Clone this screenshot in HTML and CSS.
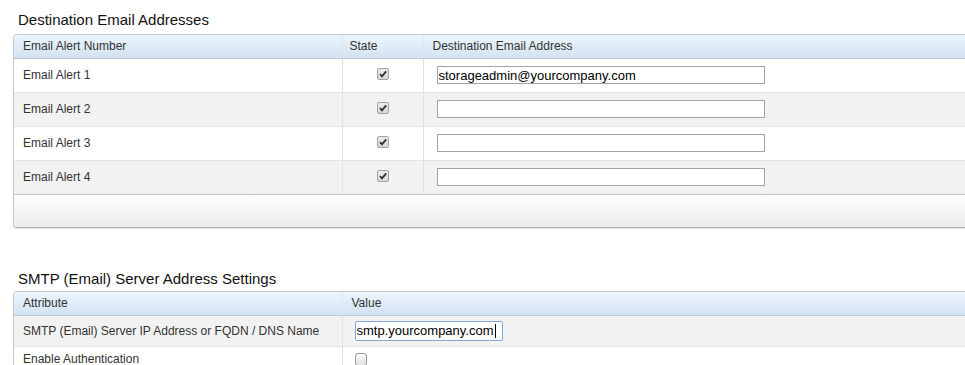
FILE: index.html
```html
<!DOCTYPE html>
<html>
  <head>
    <title>Email Alert Settings</title>
    <link rel="stylesheet" href="styles.css">
  </head>
  <body>
    <div class="section">
      <h2 class="panel-title">Destination Email Addresses</h2>
      <div class="grid">
        <table>
          <thead>
            <tr>
              <th class="col-name">Email Alert Number</th>
              <th class="col-state">State</th>
              <th>Destination Email Address</th>
            </tr>
          </thead>
          <tbody>
            <tr>
              <td>Email Alert 1</td>
              <td class="center"><span class="check checked"><svg viewBox="0 0 12 12" width="12" height="12"><path d="M3 6.2 L5 8.4 L9.2 3.4" fill="none" stroke="#333" stroke-width="1.8"/></svg></span></td>
              <td class="field-cell"><input type="text" class="text-input" value="storageadmin@yourcompany.com"></td>
            </tr>
            <tr class="alt">
              <td>Email Alert 2</td>
              <td class="center"><span class="check checked"><svg viewBox="0 0 12 12" width="12" height="12"><path d="M3 6.2 L5 8.4 L9.2 3.4" fill="none" stroke="#333" stroke-width="1.8"/></svg></span></td>
              <td class="field-cell"><input type="text" class="text-input" value=""></td>
            </tr>
            <tr>
              <td>Email Alert 3</td>
              <td class="center"><span class="check checked"><svg viewBox="0 0 12 12" width="12" height="12"><path d="M3 6.2 L5 8.4 L9.2 3.4" fill="none" stroke="#333" stroke-width="1.8"/></svg></span></td>
              <td class="field-cell"><input type="text" class="text-input" value=""></td>
            </tr>
            <tr class="alt">
              <td>Email Alert 4</td>
              <td class="center"><span class="check checked"><svg viewBox="0 0 12 12" width="12" height="12"><path d="M3 6.2 L5 8.4 L9.2 3.4" fill="none" stroke="#333" stroke-width="1.8"/></svg></span></td>
              <td class="field-cell"><input type="text" class="text-input" value=""></td>
            </tr>
          </tbody>
        </table>
        <div class="grid-foot"></div>
      </div>
    </div>

    <div class="section section-smtp">
      <h2 class="panel-title">SMTP (Email) Server Address Settings</h2>
      <div class="grid grid-open">
        <table>
          <thead>
            <tr>
              <th class="col-name">Attribute</th>
              <th>Value</th>
            </tr>
          </thead>
          <tbody>
            <tr class="alt short">
              <td>SMTP (Email) Server IP Address or FQDN / DNS Name</td>
              <td class="value-cell"><input type="text" class="text-input focused" value="smtp.yourcompany.com"><span class="caret"></span></td>
            </tr>
            <tr class="short last">
              <td>Enable Authentication</td>
              <td class="value-cell"><span class="check"></span></td>
            </tr>
          </tbody>
        </table>
      </div>
    </div>
  </body>
</html>
```

FILE: styles.css
```css
* {
  box-sizing: border-box;
}

body {
  font-family: "Liberation Sans", Arial, sans-serif;
  margin: 0;
  padding: 0;
  color: #333;
  background: #fff;
  overflow: hidden;
}

.panel-title {
  margin: 0;
  padding: 12px 0 6px 18px;
  font-size: 15px;
  line-height: 16px;
  font-weight: normal;
  color: #111;
}

.section-smtp {
  margin-top: 29px;
}

.section-smtp .panel-title {
  padding-top: 14px;
  padding-bottom: 4px;
}

.grid {
  margin-left: 13px;
  width: 1000px;
  border: 1px solid #c4c9ce;
  border-bottom-color: #b0b0b0;
  border-radius: 4px;
  overflow: hidden;
  box-shadow: 0 1px 1px rgba(0, 0, 0, 0.12);
}

.grid-open {
  border-bottom: none;
  border-radius: 4px 4px 0 0;
  box-shadow: none;
}

table {
  border-collapse: collapse;
  width: 100%;
  font-size: 12px;
}

th {
  height: 23px;
  padding: 0 8px 0 9px;
  text-align: left;
  font-weight: normal;
  color: #333;
  background: linear-gradient(#ecf5fd, #d2e2f1);
  border-bottom: 1px solid #bccde0;
  border-right: 1px solid #dce8f3;
}

th.col-name {
  width: 328px;
}

th.col-state {
  width: 81px;
  padding-left: 7px;
}

td {
  height: 34px;
  padding: 0 8px 0 9px;
  border-top: 1px solid #e2e2e2;
  border-right: 1px solid #e2e2e2;
  background: #fff;
}

tbody tr:first-child td {
  border-top: none;
}

tr.alt td {
  background: #f2f2f2;
}

tr.short td {
  height: 31px;
}

tr.last td {
  height: 24px;
  padding-top: 2px;
}

td.center {
  text-align: center;
  padding: 0;
}

td.field-cell {
  padding-left: 13px;
}

td.value-cell {
  padding-left: 12px;
}

.text-input {
  display: block;
  width: 328px;
  height: 18px;
  padding: 0 1px;
  border: 1px solid #a3a3a3;
  border-radius: 0;
  font-family: "Liberation Sans", Arial, sans-serif;
  font-size: 13px;
  color: #000;
  background: #fff;
  outline: none;
}

.text-input.focused {
  display: inline-block;
  vertical-align: middle;
  width: 148px;
  height: 20px;
  border-color: #7ea9d8;
  border-radius: 2px;
}

.value-cell .caret {
  display: inline-block;
  vertical-align: middle;
  width: 1px;
  height: 14px;
  margin-left: -8px;
  background: #000;
}

.check {
  display: inline-block;
  width: 12px;
  height: 12px;
  border: 1px solid #a2a2a2;
  border-radius: 2px;
  background: linear-gradient(#fafafa, #e2e2e2);
  vertical-align: middle;
  position: relative;
  top: -2px;
}

.check svg {
  display: block;
  margin: -1px 0 0 -1px;
}

.check.checked {
  background: linear-gradient(#ececec, #d6d6d6);
}

.value-cell .check {
  width: 12px;
  height: 13px;
  border-color: #9a9a9a;
  border-radius: 3px;
  top: 0;
}

.grid-foot {
  height: 33px;
  border-top: 1px solid #c6c6c6;
  background: linear-gradient(#fcfdfd, #ececec);
}
```
